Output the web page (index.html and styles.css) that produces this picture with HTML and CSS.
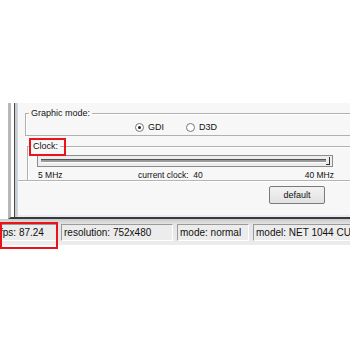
FILE: index.html
```html
<!DOCTYPE html>
<html lang="en">
  <head>
    <meta charset="utf-8" />
    <title>Emulator settings</title>
    <link rel="stylesheet" href="styles.css">
  </head>
  <body>
    <div class="page">
      <div class="window">
        <div class="client">
          <fieldset class="group graphic">
            <legend>Graphic mode:</legend>
            <div class="radios">
              <span class="radio checked"></span><span class="radio-label">GDI</span>
              <span class="radio"></span><span class="radio-label">D3D</span>
            </div>
          </fieldset>
          <fieldset class="group clock">
            <legend>Clock:</legend>
            <div class="slider">
              <div class="channel"></div>
              <div class="thumb"></div>
            </div>
            <div class="ticks">
              <span class="min">5 MHz</span>
              <span class="current">current clock:&nbsp; 40</span>
              <span class="max">40 MHz</span>
            </div>
          </fieldset>
          <div class="separator"></div>
          <div class="actions">
            <button class="btn">default</button>
          </div>
        </div>
      </div>
      <div class="statusbar">
        <div class="panel fps">fps: 87.24</div>
        <div class="panel res">resolution: 752x480</div>
        <div class="panel mode">mode: normal</div>
        <div class="panel model">model: NET 1044 CU</div>
      </div>
      <!-- highlight marks drawn over the screenshot -->
      <div class="mark mark-clock"></div>
      <div class="mark mark-fps"></div>
    </div>
  </body>
</html>
```

FILE: styles.css
```css
body {
  margin: 0;
  background: #fff;
  font-family: "Liberation Sans", Arial, sans-serif;
}

.page {
  position: relative;
  width: 350px;
  height: 350px;
  overflow: hidden;
  padding-top: 103px;
  box-sizing: border-box;
}

.window {
  width: 420px;
  margin-left: 8px;
  border-left: 3px solid #b8b8b8;
  border-bottom: 2px solid #3a3a3a;
  box-shadow: inset 3px 0 0 #fff, inset 4px 0 0 #4a4a4a, inset 6px 0 0 #c8ccd0, inset 7px 0 0 #55595e;
  padding-left: 6px;
}

.client {
  background: #f7f7f7;
  border-left: 1px solid #d0d8e0;
  border-bottom: 2px solid #e6ecf2;
  height: 114px;
  padding-top: 5px;
  box-sizing: border-box;
  font-size: 9px;
  color: #111;
}

.group {
  margin: 0;
  border: 1px solid #b0b0b0;
  border-right: none;
  box-shadow: inset 1px 1px 0 #fff;
  padding: 0;
}

.group legend {
  padding: 0 2px;
  margin-left: 3px;
  line-height: 11px;
  font-size: 9px;
}

.graphic {
  margin-left: 7px;
  height: 28px;
  box-sizing: border-box;
}

.radios {
  display: flex;
  align-items: center;
  padding-left: 109px;
  margin-top: 3px;
}

.radio {
  width: 7px;
  height: 7px;
  border: 1px solid #777;
  border-radius: 50%;
  background: #fff;
  margin-right: 4px;
  position: relative;
}

.radio.checked::after {
  content: "";
  position: absolute;
  left: 2px;
  top: 2px;
  width: 3px;
  height: 3px;
  border-radius: 50%;
  background: #222;
}

.radio-label {
  margin-right: 22px;
}

.clock {
  margin-left: 9px;
  margin-top: 5px;
  border-bottom: none;
  height: 40px;
  box-sizing: border-box;
}

.slider {
  position: relative;
  margin-left: 9px;
  width: 296px;
  height: 12px;
  box-sizing: border-box;
  border: 1px solid #8c8c8c;
  background: #ededed;
  margin-top: 3px;
}

.channel {
  margin: 3px 6px 0 3px;
  height: 2px;
  border-top: 1px solid #555;
  border-bottom: 1px solid #fff;
  background: #999;
}

.thumb {
  position: absolute;
  right: 2px;
  top: 1px;
  width: 3px;
  height: 7px;
  border-right: 1px solid #333;
  border-bottom: 1px solid #333;
}

.ticks {
  display: flex;
  width: 296px;
  margin-left: 10px;
  margin-top: 3px;
  font-size: 8.5px;
}

.ticks .min {
  width: 100px;
}

.ticks .max {
  margin-left: auto;
}

.separator {
  height: 1px;
  background: #b4b4b4;
  border-bottom: 1px solid #fff;
  margin-top: -1px;
}

.actions {
  padding-left: 251px;
  padding-top: 4px;
}

.btn {
  width: 56px;
  height: 18px;
  border: 1px solid #7a7a7a;
  border-radius: 2px;
  background: linear-gradient(#f2f2f2, #e2e2e2);
  font-family: "Liberation Sans", Arial, sans-serif;
  font-size: 9px;
  color: #111;
  padding: 0;
}

.statusbar {
  display: flex;
  gap: 4px;
  height: 26px;
  box-sizing: border-box;
  padding-top: 5px;
  padding-bottom: 4px;
  background: linear-gradient(#c9c9c9, #e4e4e4 5px, #ececec);
  font-size: 10px;
  color: #111;
}

.panel {
  flex-shrink: 0;
  border-top: 1px solid #9a9a9a;
  border-left: 1px solid #9a9a9a;
  border-right: 1px solid #fff;
  border-bottom: 1px solid #fff;
  background: #ececec;
  padding-left: 2px;
  line-height: 15px;
  white-space: nowrap;
  box-sizing: border-box;
}

.fps {
  width: 60px;
  margin-left: -3px;
}

.res {
  width: 112px;
}

.mode {
  width: 72px;
}

.model {
  width: 100px;
}

.mark {
  position: absolute;
  border: 2px solid #e8141a;
  box-sizing: border-box;
}

.mark-clock {
  left: 29px;
  top: 138px;
  width: 37px;
  height: 18px;
}

.mark-fps {
  left: 0;
  top: 222px;
  width: 58px;
  height: 27px;
}
```
